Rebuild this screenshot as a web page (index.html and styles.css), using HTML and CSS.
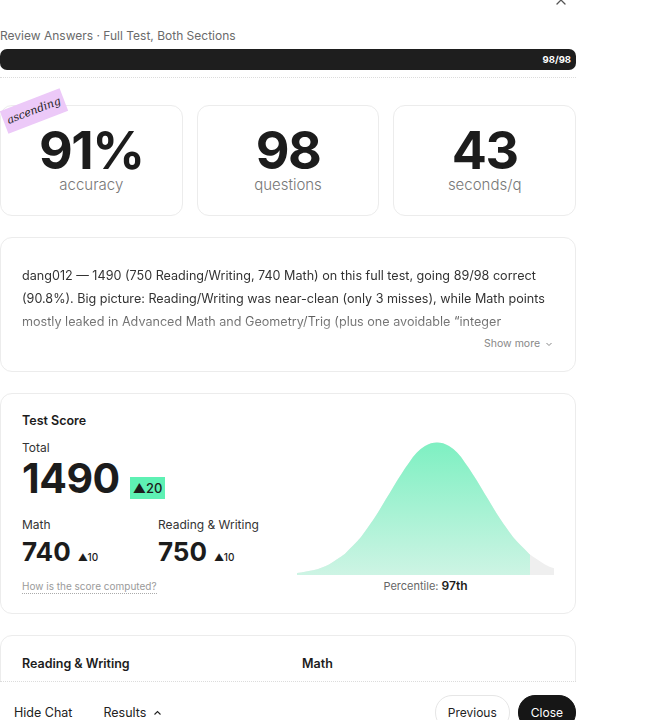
FILE: index.html
```html
<!DOCTYPE html>
<html lang="en">
<head>
  <meta charset="UTF-8">
  <title>Review Answers</title>
  <meta name="viewport" content="width=device-width, initial-scale=1">
  <link rel="stylesheet" href="styles.css">
</head>
<body>
<div class="page">
  <div class="main">
    <div class="topbar">
      <svg class="close-x" width="10" height="10" viewBox="0 0 10 10"><path d="M1 1L9 9M9 1L1 9" stroke="#555" stroke-width="1.3" stroke-linecap="round"/></svg>
    </div>

    <div class="title">Review Answers · Full Test, Both Sections</div>
    <div class="progress"><span>98/98</span></div>
    <div class="divider"></div>

    <div class="stats">
      <div class="stat">
        <div class="sticker">ascending</div>
        <div class="stat-num">91%</div>
        <div class="stat-label">accuracy</div>
      </div>
      <div class="stat">
        <div class="stat-num">98</div>
        <div class="stat-label">questions</div>
      </div>
      <div class="stat">
        <div class="stat-num">43</div>
        <div class="stat-label">seconds/q</div>
      </div>
    </div>

    <div class="card summary">
      <p class="summary-text">dang012 — 1490 (750 Reading/Writing, 740 Math) on this full test, going 89/98 correct (90.8%). Big picture: Reading/Writing was near-clean (only 3 misses), while Math points mostly leaked in Advanced Math and Geometry/Trig (plus one avoidable “integer rounding” slip). Tighten those two areas and the ceiling is right there.</p>
      <div class="show-more">Show more <svg width="8" height="8" viewBox="0 0 8 8"><path d="M1.5 3L4 5.5L6.5 3" fill="none" stroke="#888" stroke-width="1"/></svg></div>
    </div>

    <div class="card score">
      <div class="score-left">
        <div class="card-title">Test Score</div>
        <div class="lbl total-lbl">Total</div>
        <div class="total-row">
          <span class="total">1490</span>
          <span class="badge">▲20</span>
        </div>
        <div class="sections">
          <div>
            <div class="lbl">Math</div>
            <div class="sec-row"><span class="sec-num">740</span><span class="delta">▲10</span></div>
          </div>
          <div>
            <div class="lbl">Reading &amp; Writing</div>
            <div class="sec-row"><span class="sec-num">750</span><span class="delta">▲10</span></div>
          </div>
        </div>
        <a class="how">How is the score computed?</a>
      </div>
      <div class="score-right">
        <svg class="curve" width="257" height="133" viewBox="0 0 257 133">
          <defs>
            <linearGradient id="g" x1="0" y1="0" x2="0" y2="1">
              <stop offset="0" stop-color="#7ef0c2"/>
              <stop offset="1" stop-color="#cdf4e4"/>
            </linearGradient>
            <clipPath id="clipL"><rect x="0" y="0" width="233" height="133"/></clipPath>
          </defs>
          <path d="M0 133 L0 131.1 C6 130.3 10 129.4 16 128.3 C22 126.8 27 124.9 32 122.4 C38 118.6 43 115.6 48 111.8 C54 105.5 59 100.8 64 95 C70 86.8 75 80 80 72.1 C86 62 91 54 96 45.6 C102 35.5 107 27.5 112 20.8 C117 13 122 7.6 128 4.1 C132 1.5 136 0.5 140 0.5 C144 0.5 148 1.5 152 4.1 C158 7.6 163 13 168 20.8 C173 27.5 178 35.5 184 45.6 C189 54 194 62 200 72.1 C205 80 210 86.8 216 95 C221 100.8 226 105.5 232 111.8 C237 115.6 242 118.6 248 122.4 C251 124 254 125.2 257 126.2 L257 133 Z" fill="#efefef"/>
          <path d="M0 133 L0 131.1 C6 130.3 10 129.4 16 128.3 C22 126.8 27 124.9 32 122.4 C38 118.6 43 115.6 48 111.8 C54 105.5 59 100.8 64 95 C70 86.8 75 80 80 72.1 C86 62 91 54 96 45.6 C102 35.5 107 27.5 112 20.8 C117 13 122 7.6 128 4.1 C132 1.5 136 0.5 140 0.5 C144 0.5 148 1.5 152 4.1 C158 7.6 163 13 168 20.8 C173 27.5 178 35.5 184 45.6 C189 54 194 62 200 72.1 C205 80 210 86.8 216 95 C221 100.8 226 105.5 232 111.8 C237 115.6 242 118.6 248 122.4 C251 124 254 125.2 257 126.2 L257 133 Z" fill="url(#g)" clip-path="url(#clipL)"/>
        </svg>
        <div class="percentile">Percentile: <b>97th</b></div>
      </div>
    </div>

    <div class="card breakdown">
      <div class="card-title">Reading &amp; Writing</div>
      <div class="card-title">Math</div>
    </div>
  </div>

  <div class="footer">
    <div class="footer-left">
      <span>Hide Chat</span>
      <span>Results <svg width="9" height="8" viewBox="0 0 9 8"><path d="M1.5 5.5L4.5 2.5L7.5 5.5" fill="none" stroke="#222" stroke-width="1.1"/></svg></span>
    </div>
    <div class="footer-right">
      <button class="btn">Previous</button>
      <button class="btn dark">Close</button>
    </div>
  </div>
</div>
</body>
</html>
```

FILE: styles.css
```css
body {
  margin: 0;
  background: #fff;
  color: #1c1c1c;
  font-family: Inter, "Noto Sans", sans-serif;
}

.page {
  width: 576px;
  height: 720px;
  display: flex;
  flex-direction: column;
}

.main {
  height: 681px;
  overflow: hidden;
  flex-shrink: 0;
}

.topbar {
  height: 28px;
  display: flex;
  justify-content: flex-end;
}

.close-x {
  margin-top: -5px;
  margin-right: 10px;
}

.title {
  font-size: 12px;
  line-height: 16px;
  color: #6a6a6a;
}

.progress {
  margin-top: 5px;
  height: 21px;
  background: #1e1e1e;
  border-radius: 7px;
  display: flex;
  align-items: center;
  justify-content: flex-end;
  padding-right: 5px;
}

.progress span {
  color: #fff;
  font-size: 9.5px;
  font-weight: 700;
}

.divider {
  margin-top: 7px;
  border-top: 1px dotted #dcdcdc;
}

.stats {
  margin-top: 27px;
  display: grid;
  grid-template-columns: repeat(3, 1fr);
  gap: 14px;
}

.stat {
  position: relative;
  height: 111px;
  box-sizing: border-box;
  border: 1px solid #ececec;
  border-radius: 12px;
  text-align: center;
  padding-top: 21px;
}

.stat-num {
  font-size: 52px;
  line-height: 48px;
  font-weight: 700;
  letter-spacing: -1.5px;
}

.stat-label {
  margin-top: 1px;
  font-size: 15px;
  line-height: 18px;
  color: #777;
  font-weight: 300;
}

.sticker {
  position: absolute;
  left: 1px;
  top: -7px;
  width: 64px;
  height: 24px;
  background: #ecc9f8;
  transform: rotate(-21deg);
  font-family: "DejaVu Serif", serif;
  font-style: italic;
  font-size: 11px;
  line-height: 23px;
  color: #222;
}

.card {
  border: 1px solid #ececec;
  border-radius: 12px;
  margin-top: 21px;
}

.summary {
  padding: 26px 22px 20px 21px;
}

.summary-text {
  margin: 0;
  font-size: 12.6px;
  line-height: 23px;
  color: #333;
  max-height: 69px;
  overflow: hidden;
  -webkit-mask-image: linear-gradient(to bottom, #000 62%, rgba(0, 0, 0, 0.45) 100%);
  mask-image: linear-gradient(to bottom, #000 62%, rgba(0, 0, 0, 0.45) 100%);
}

.show-more {
  margin-top: 4px;
  font-size: 10.5px;
  line-height: 14px;
  color: #888;
  text-align: right;
}

.show-more svg {
  margin-left: 2px;
  vertical-align: -1px;
}

.score {
  padding: 19px 21px 19px;
  display: flex;
}

.card-title {
  font-size: 12.5px;
  line-height: 16px;
  font-weight: 600;
}

.score-left {
  width: 277px;
}

.lbl {
  font-size: 12px;
  line-height: 16px;
  color: #333;
}

.total-lbl {
  margin-top: 11px;
}

.total-row {
  margin-top: 2px;
  display: flex;
  align-items: baseline;
  gap: 10px;
}

.total {
  font-size: 41px;
  line-height: 40px;
  font-weight: 700;
  letter-spacing: -0.5px;
}

.badge {
  background: #5ef1b4;
  font-size: 13px;
  line-height: 16px;
  padding: 3px;
  font-weight: 500;
}

.sections {
  margin-top: 18px;
  display: grid;
  grid-template-columns: 136px 1fr;
}

.sec-row {
  margin-top: 6px;
  display: flex;
  align-items: baseline;
  gap: 7px;
}

.sec-num {
  font-size: 26px;
  line-height: 26px;
  font-weight: 700;
}

.delta {
  font-size: 10px;
  font-weight: 500;
}

.how {
  display: inline-block;
  margin-top: 15px;
  font-size: 10px;
  line-height: 13px;
  color: #9a9a9a;
  border-bottom: 1px dotted #aaa;
}

.score-right {
  width: 257px;
  text-align: center;
}

.curve {
  display: block;
  margin-top: 29px;
}

.percentile {
  margin-top: 4px;
  font-size: 11px;
  line-height: 14px;
  color: #666;
}

.percentile b {
  font-size: 12px;
  color: #1c1c1c;
  font-weight: 600;
}

.breakdown {
  padding: 20px 21px 20px;
  display: grid;
  grid-template-columns: 280px 1fr;
}

.footer {
  flex: 1;
  border-top: 1px dotted #dcdcdc;
  display: flex;
  justify-content: space-between;
  padding-top: 13px;
  overflow: hidden;
}

.footer-left {
  display: flex;
  gap: 31px;
  padding-left: 14px;
  font-size: 12.5px;
  line-height: 35px;
  color: #222;
}

.footer-left svg {
  margin-left: 3px;
}

.footer-right {
  display: flex;
  gap: 8px;
}

.btn {
  height: 35px;
  padding: 0 12px;
  border-radius: 17px;
  border: 1px solid #e6e6e6;
  background: #fff;
  font-family: Inter, "Noto Sans", sans-serif;
  font-size: 12px;
  color: #222;
}

.btn.dark {
  background: #161616;
  border-color: #161616;
  color: #fff;
}
```
